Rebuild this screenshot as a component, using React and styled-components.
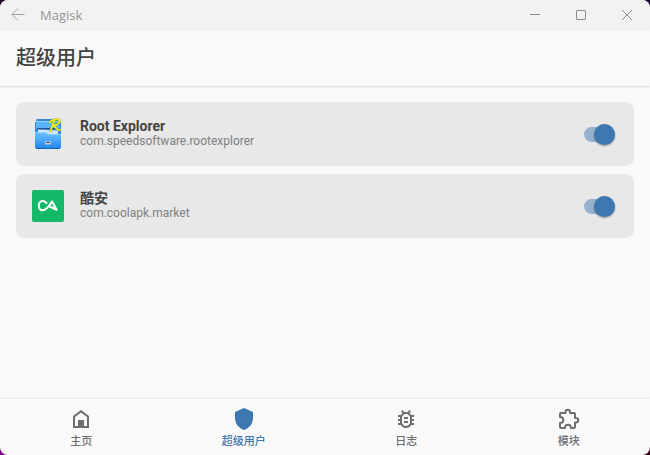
import React, { useState } from "react";
import styled, { createGlobalStyle } from "styled-components";
import { MdOutlineBugReport } from "react-icons/md";

const GlobalStyle = createGlobalStyle`
  * {
    box-sizing: border-box;
  }

  body {
    margin: 0;
    background: linear-gradient(to bottom, #1c0630 50%, transparent 50%),
      linear-gradient(to right, #7a0f86 50%, #3a0620 50%);
    font-family: Roboto, "Noto Sans CJK SC", sans-serif;
    color: #444444;
  }
`;

const Window = styled.div`
  display: flex;
  flex-direction: column;
  min-height: 100vh;
  border-radius: 8px;
  overflow: hidden;
  background: #f9f9f9;
`;

const TitleBar = styled.div`
  display: flex;
  align-items: center;
  height: 30px;
  background: #f2f2f2;
  color: #8c8c8c;
`;

const WindowTitle = styled.span`
  flex: 1;
  padding-left: 4px;
  font-family: "Open Sans", sans-serif;
  font-size: 13px;
  line-height: 16px;
  color: #949494;
`;

const WindowButton = styled.button`
  display: flex;
  align-items: center;
  justify-content: center;
  width: ${(props) => (props.$narrow ? "36px" : "46px")};
  height: 30px;
  padding: 0;
  border: none;
  background: none;
  color: ${(props) => (props.$narrow ? "#a0a0a0" : "inherit")};
`;

const Header = styled.header`
  display: flex;
  align-items: center;
  height: 56px;
  padding: 0 16px;
  box-shadow: 0 1px 2px rgba(0, 0, 0, 0.14);
`;

const PageTitle = styled.h1`
  margin: 0;
  font-size: 20px;
  font-weight: 500;
  line-height: 24px;
`;

const AppList = styled.main`
  display: flex;
  flex: 1;
  flex-direction: column;
  gap: 8px;
  padding: 16px;
`;

const AppCard = styled.label`
  display: flex;
  align-items: center;
  gap: 16px;
  height: 64px;
  padding: 0 16px;
  border-radius: 8px;
  background: #e8e8e8;
`;

const AppInfo = styled.span`
  display: flex;
  flex: 1;
  flex-direction: column;
  padding-bottom: 2px;
`;

const AppName = styled.span`
  font-size: 14px;
  font-weight: 700;
  line-height: 16px;
`;

const PackageName = styled.span`
  font-size: 12px;
  line-height: 14px;
  color: #808080;
`;

const Switch = styled.input`
  display: flex;
  align-items: center;
  justify-content: ${(props) => (props.checked ? "flex-end" : "flex-start")};
  appearance: none;
  width: 31px;
  height: 15px;
  margin: 0 3px;
  border-radius: 8px;
  background: ${(props) => (props.checked ? "#95b3d1" : "#b8b8b8")};

  &::before {
    content: "";
    flex: none;
    width: 21px;
    height: 21px;
    border-radius: 50%;
    background: ${(props) => (props.checked ? "#3e78b0" : "#f5f5f5")};
    box-shadow: 0 1px 2px rgba(0, 0, 0, 0.35);
  }
`;

const BottomNav = styled.nav`
  display: flex;
  height: 56px;
  box-shadow: 0 -1px 2px rgba(0, 0, 0, 0.08);
`;

const NavLink = styled.a`
  display: flex;
  flex: 1;
  flex-direction: column;
  align-items: center;
  gap: 1px;
  padding-top: 8px;
  font-size: 11px;
  font-weight: 500;
  line-height: 20px;
  text-decoration: none;
  color: ${(props) => (props.$active ? "#3e78b0" : "#6e6e6e")};
`;

const BackIcon = () => (
  <svg width="14" height="14" viewBox="0 0 14 14" fill="none" stroke="currentColor">
    <path d="M13.5 6.5H1M7 0.5l-6 6 6 6" />
  </svg>
);

const MinimizeIcon = () => (
  <svg width="10" height="10" viewBox="0 0 10 10" stroke="currentColor">
    <path d="M0 4.5h10" />
  </svg>
);

const MaximizeIcon = () => (
  <svg width="10" height="10" viewBox="0 0 10 10" fill="none" stroke="currentColor">
    <rect x="0.5" y="0.5" width="9" height="9" rx="0.5" />
  </svg>
);

const CloseIcon = () => (
  <svg width="10" height="10" viewBox="0 0 10 10" stroke="currentColor">
    <path d="M0 0l10 10M10 0L0 10" />
  </svg>
);

const HomeIcon = () => (
  <svg width="24" height="24" viewBox="0 0 24 24" fill="currentColor">
    <path d="M12 3L4 9v12h16V9zM6 19v-9l6-4.5 6 4.5v9h-3v-6H9v6z" />
  </svg>
);

const ShieldIcon = () => (
  <svg width="24" height="24" viewBox="0 0 24 24" fill="currentColor">
    <path d="M12 1L3 5v6c0 5.55 3.84 10.74 9 12 5.16-1.26 9-6.45 9-12V5z" />
  </svg>
);

const PuzzleIcon = () => (
  <svg width="24" height="24" viewBox="0 0 24 24" fill="none" stroke="currentColor">
    <path
      d="M3 10V7a1 1 0 0 1 1-1h4.5V5a2 2 0 0 1 4.5 0v1H17a1 1 0 0 1 1 1v4h1a2 2 0 0 1 0 4.5h-1V20a1 1 0 0 1-1 1h-3c0-2-1.2-3.3-3-3.3S8 19 8 21H4a1 1 0 0 1-1-1v-4c2 0 3.3-1.2 3.3-3S5 10 3 10z"
      strokeWidth="2"
      strokeLinejoin="round"
    />
  </svg>
);

const CabinetIcon = () => (
  <svg width="32" height="32" viewBox="0 0 32 32">
    <defs>
      <linearGradient id="drawer" x1="0" y1="0" x2="0" y2="1">
        <stop offset="0" stopColor="#6cc0ff" />
        <stop offset="0.5" stopColor="#48a6fa" />
        <stop offset="1" stopColor="#1f80ea" />
      </linearGradient>
    </defs>
    <path d="M5 1h21l2 3 1 1v23l-1 3H4l-1-3V5z" fill="#2b86e6" />
    <path d="M5 1h21l1 2H4z" fill="#3a86d0" />
    <path d="M4 3h23l1 8H4z" fill="#5ab4fc" />
    <path d="M4 3h23v1H4z" fill="#8fd2ff" />
    <path d="M5 10h22v7H5z" fill="#3f8bd8" />
    <path d="M5 10h20v1.500H5z" fill="#23548f" />
    <path d="M6 11.5l20 1v4H6z" fill="#cfe8fc" />
    <path d="M7 14h7l2 2h9v2H7z" fill="#8fc8f5" />
    <path d="M3 14h10l3 2h13v12l-1 3H4l-1-3z" fill="url(#drawer)" />
    <path d="M3 14.5h10l3 2h13" fill="none" stroke="#9ad8ff" strokeWidth="0.7" />
    <path d="M4 30h24v1H4z" fill="#1660ba" />
    <rect x="13" y="23" width="6" height="3.5" rx="0.5" fill="#b9d0e6" />
    <path d="M14 23.700h4v1.300h-4z" fill="#3f5878" />
    <g fill="none" strokeLinecap="round">
      <path
        d="M17.500 4.500c2-3 10-4.500 10-1.500 0 2.700-3 4.500-7 4.800M22 3L18.500 13M21.500 8c2.500 0 3 5 6.500 4"
        stroke="#6a9d55"
        strokeWidth="2.2"
      />
      <path
        d="M17.500 4.500c2-3 10-4.500 10-1.500 0 2.700-3 4.500-7 4.800M22 3L18.500 13M21.500 8c2.500 0 3 5 6.500 4"
        stroke="#fff200"
        strokeWidth="1.500"
      />
    </g>
  </svg>
);

const CoolapkIcon = () => (
  <svg width="32" height="32" viewBox="0 0 32 32">
    <rect width="32" height="32" rx="2" fill="#14b866" />
    <path
      d="M14.5 13C13 11.3 11.6 11 10.6 11 8.4 11 6.8 13 6.8 15.7s1.6 4.6 3.8 4.6c3.4 0 6.4-4 9.4-8.8l4.6 8.3-7.6-3.6"
      fill="none"
      stroke="#ffffff"
      strokeWidth="2.1"
      strokeLinejoin="round"
      strokeLinecap="round"
    />
  </svg>
);

const apps = [
  { name: "Root Explorer", pkg: "com.speedsoftware.rootexplorer", icon: <CabinetIcon /> },
  { name: "酷安", pkg: "com.coolapk.market", icon: <CoolapkIcon /> },
];

const navItems = [
  { id: "home", title: "主页", icon: <HomeIcon /> },
  { id: "superuser", title: "超级用户", icon: <ShieldIcon /> },
  { id: "logs", title: "日志", icon: <MdOutlineBugReport size={24} /> },
  { id: "modules", title: "模块", icon: <PuzzleIcon /> },
];

const AppItem = ({ data }) => {
  const [granted, setGranted] = useState(true);
  return (
    <AppCard>
      {data.icon}
      <AppInfo>
        <AppName>{data.name}</AppName>
        <PackageName>{data.pkg}</PackageName>
      </AppInfo>
      <Switch
        type="checkbox"
        checked={granted}
        onChange={(e) => setGranted(e.target.checked)}
      />
    </AppCard>
  );
};

export default function App() {
  return (
    <>
      <GlobalStyle />
      <Window>
        <TitleBar>
          <WindowButton $narrow aria-label="Back">
            <BackIcon />
          </WindowButton>
          <WindowTitle>Magisk</WindowTitle>
          <WindowButton aria-label="Minimize">
            <MinimizeIcon />
          </WindowButton>
          <WindowButton aria-label="Maximize">
            <MaximizeIcon />
          </WindowButton>
          <WindowButton aria-label="Close">
            <CloseIcon />
          </WindowButton>
        </TitleBar>
        <Header>
          <PageTitle>超级用户</PageTitle>
        </Header>
        <AppList>
          {apps.map((item) => (
            <AppItem data={item} key={item.pkg} />
          ))}
        </AppList>
        <BottomNav>
          {navItems.map((item) => (
            <NavLink
              href={`#${item.id}`}
              key={item.id}
              $active={item.id === "superuser"}
            >
              {item.icon}
              {item.title}
            </NavLink>
          ))}
        </BottomNav>
      </Window>
    </>
  );
}
